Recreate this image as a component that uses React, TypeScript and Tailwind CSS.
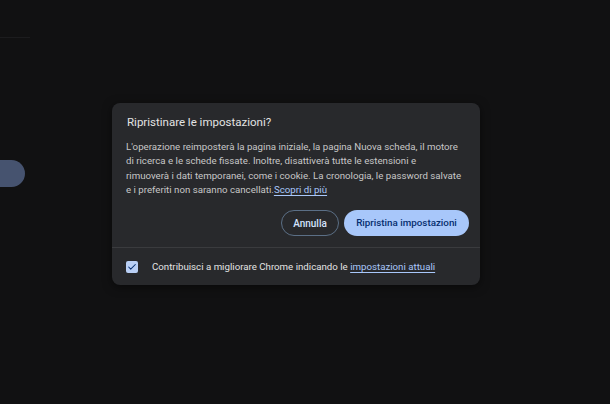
import { Check } from 'lucide-react';

const font = { fontFamily: 'Roboto, "Liberation Sans", sans-serif' };

export default function App() {
  return (
    <div className="relative w-[610px] h-[404px] bg-[#111112] overflow-hidden" style={font}>
      {/* background page, dimmed behind the dialog */}
      <div className="flex flex-col">
        <div className="mt-[37px] w-[30px] h-px bg-[#1c1c1e]" />
        <div className="mt-[122px] w-[25px] h-[27px] rounded-r-full bg-[#46536f]" />
      </div>

      {/* dialog */}
      <div className="absolute inset-0 pl-[112px] pt-[103px]">
        <div className="w-[368px] h-[182px] flex flex-col rounded-[8px] bg-[#28292c] shadow-[0_2px_10px_rgba(0,0,0,0.5)]">
          <div className="pl-[14px] pr-[11px] pt-[11px]">
            <h1 className="pl-px text-[11.5px] leading-[16px] text-[#e3e3e3]">Ripristinare le impostazioni?</h1>
            <p className="mt-[10px] text-[9.7px] leading-[14.3px] text-[#c7c7c7] whitespace-nowrap">
              L'operazione reimposterà la pagina iniziale, la pagina Nuova scheda, il motore
              <br />
              di ricerca e le schede fissate. Inoltre, disattiverà tutte le estensioni e
              <br />
              rimuoverà i dati temporanei, come i cookie. La cronologia, le password salvate
              <br />
              e i preferiti non saranno cancellati.
              <a className="text-[#a8c7fa] underline underline-offset-2">Scopri di più</a>
            </p>
            <div className="mt-[13px] flex justify-end gap-[5px]">
              <button className="w-[58px] h-[26px] rounded-full border border-[#5b6f86] text-[10px] font-medium text-[#d3e3fd]">
                Annulla
              </button>
              <button className="w-[125px] h-[26px] rounded-full bg-[#a8c7fa] text-[9.8px] font-medium text-[#062e6f]">
                Ripristina impostazioni
              </button>
            </div>
          </div>
          <div className="mt-[11px] h-px bg-[#3a3b3e]" />
          <div className="flex-1 flex items-center px-[14px] pt-px">
            <div className="w-[12px] h-[12px] rounded-[2px] bg-[#b9cff5] flex items-center justify-center">
              <Check className="w-[10px] h-[10px] text-[#062e6f]" strokeWidth={2.5} />
            </div>
            <span className="ml-[14px] text-[9.7px] text-[#e3e3e3] whitespace-nowrap">
              Contribuisci a migliorare Chrome indicando le{' '}
              <a className="text-[#a8c7fa] underline underline-offset-2">impostazioni attuali</a>
            </span>
          </div>
        </div>
      </div>
    </div>
  );
}
